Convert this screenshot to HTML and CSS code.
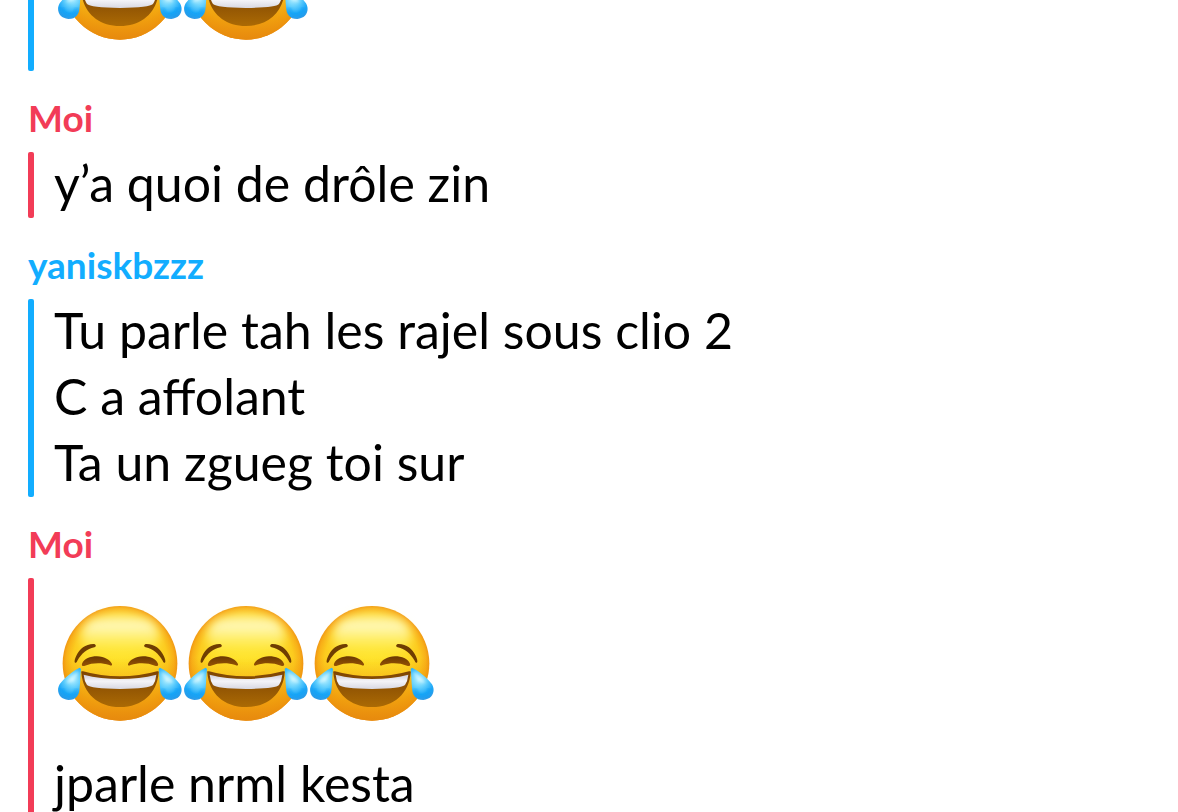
FILE: index.html
```html
<!DOCTYPE html>
<html lang="fr">
<head>
    <meta charset="utf-8">
    <meta name="viewport" content="width=device-width, initial-scale=1">
    <title>Chat</title>
    <link rel="stylesheet" href="styles.css">
</head>
<body>
    <!-- emoji shared by the messages -->
    <svg class="defs" width="0" height="0" aria-hidden="true">
        <defs>
            <radialGradient id="face" gradientUnits="userSpaceOnUse" cx="210" cy="202" r="174">
                <stop offset="0" stop-color="#ffe32a"/>
                <stop offset=".6" stop-color="#fedc26"/>
                <stop offset=".82" stop-color="#fccb1e"/>
                <stop offset=".93" stop-color="#f8b018"/>
                <stop offset="1" stop-color="#ee9012"/>
            </radialGradient>
            <linearGradient id="shade" x1="0" y1="0" x2="0" y2="1">
                <stop offset=".45" stop-color="#ee9408" stop-opacity="0"/>
                <stop offset=".8" stop-color="#ee960b" stop-opacity=".8"/>
                <stop offset="1" stop-color="#e78a0e"/>
            </linearGradient>
            <linearGradient id="shine" x1="0" y1="0" x2="0" y2="1">
                <stop offset="0" stop-color="#fff36e" stop-opacity=".5"/>
                <stop offset=".25" stop-color="#fffac8"/>
                <stop offset=".6" stop-color="#fff373" stop-opacity=".7"/>
                <stop offset="1" stop-color="#ffec30" stop-opacity="0"/>
            </linearGradient>
            <linearGradient id="teeth" x1="0" y1="0" x2="0" y2="1">
                <stop offset="0" stop-color="#d0ced9"/>
                <stop offset=".45" stop-color="#f4f4f8"/>
                <stop offset="1" stop-color="#d8d8e2"/>
            </linearGradient>
            <linearGradient id="mouth" x1="0" y1="0" x2="0" y2="1">
                <stop offset="0" stop-color="#7c4303"/>
                <stop offset="1" stop-color="#ab6a04"/>
            </linearGradient>
            <linearGradient id="eye" x1="0" y1="0" x2="0" y2="1">
                <stop offset="0" stop-color="#6a3802"/>
                <stop offset="1" stop-color="#955304"/>
            </linearGradient>
            <radialGradient id="tear" gradientUnits="userSpaceOnUse" cx="68" cy="254" r="60">
                <stop offset="0" stop-color="#b4efff"/>
                <stop offset=".4" stop-color="#62cffd"/>
                <stop offset=".75" stop-color="#1fa9f8"/>
                <stop offset="1" stop-color="#2d9be8"/>
            </radialGradient>
            <filter id="soft" x="-20%" y="-20%" width="140%" height="140%">
                <feGaussianBlur stdDeviation="4"/>
            </filter>
            <filter id="softer" x="-25%" y="-30%" width="150%" height="160%">
                <feGaussianBlur stdDeviation="14"/>
            </filter>
        </defs>
        <symbol id="joy" viewBox="21 15 378 378">
            <circle cx="210" cy="205" r="172" fill="url(#face)"/>
            <circle cx="210" cy="205" r="172" fill="url(#shade)"/>
            <ellipse cx="210" cy="124" rx="118" ry="72" fill="url(#shine)" filter="url(#softer)"/>

            <g id="brow">
                <path d="M76 203 C72 202 74 192 79 182 C89 161 106 148 130 147 C139 147 140 155 133 157 C111 162 95 175 82 197 C80 201 79 203 76 203 Z" fill="#6f3d02"/>
                <path d="M96 206 C103 190 120 184 141 184 C164 185 180 195 186 207 C187 212 183 213 178 210 C154 202 127 203 105 212 C98 215 94 211 96 206 Z" fill="url(#eye)"/>
            </g>
            <use href="#brow" transform="translate(420 0) scale(-1 1)"/>

            <path d="M94 233 Q91 227 99 229 Q152 244 210 244 Q268 244 321 229 Q329 227 326 233 C321 294 277 336 210 336 C143 336 99 294 94 233 Z" fill="url(#mouth)"/>
            <path d="M101 239 Q152 252 210 252 Q268 252 319 239 Q317 258 309 270 Q299 281 210 282 Q121 281 111 270 Q103 258 101 239 Z" fill="url(#teeth)"/>

            <g id="drop">
                <path d="M89 218 C71 226 42 249 29 268 C17 289 28 313 55 315 C79 315 88 299 89 278 C91 259 91 237 93 222 Z" fill="url(#tear)"/>
                <path d="M84 230 C75 236 58 250 49 262 C57 266 65 262 73 253 C80 245 83 238 84 230 Z" fill="#dffaff" opacity=".7" filter="url(#soft)"/>
                <path d="M36 284 Q40 306 60 304 Q76 302 79 287" fill="none" stroke="#0b9ff4" stroke-width="10" stroke-linecap="round" opacity=".7" filter="url(#soft)"/>
            </g>
            <use href="#drop" transform="translate(419 0) scale(-1 1)"/>
        </symbol>
    </svg>

    <main class="chat">
        <section class="thread friend">
            <div class="messages">
                <p class="emojis">
                    <svg class="emoji" role="img" aria-label="joy"><use href="#joy"/></svg>
                    <svg class="emoji" role="img" aria-label="joy"><use href="#joy"/></svg>
                </p>
            </div>
        </section>

        <section class="thread me">
            <h2>Moi</h2>
            <div class="messages">
                <p>y’a quoi de drôle zin</p>
            </div>
        </section>

        <section class="thread friend">
            <h2>yaniskbzzz</h2>
            <div class="messages">
                <p>Tu parle tah les rajel sous clio 2</p>
                <p>C a affolant</p>
                <p>Ta un zgueg toi sur</p>
            </div>
        </section>

        <section class="thread me">
            <h2>Moi</h2>
            <div class="messages">
                <p class="emojis">
                    <svg class="emoji" role="img" aria-label="joy"><use href="#joy"/></svg>
                    <svg class="emoji" role="img" aria-label="joy"><use href="#joy"/></svg>
                    <svg class="emoji" role="img" aria-label="joy"><use href="#joy"/></svg>
                </p>
                <p>jparle nrml kesta</p>
            </div>
        </section>
    </main>
</body>
</html>
```
FILE: styles.css
```css
body {
    margin: 0;
    background: #fff;
    color: #000;
    font-family: "Avenir Next", Lato, sans-serif;
    overflow: hidden;
}
.defs { position: absolute; }

/* scrolled past the start of the conversation */
.chat {
    display: flex;
    flex-direction: column;
    gap: 26px;
    margin-top: -103px;
    padding: 0 28px;
}
.thread h2 {
    margin: 0 0 13px;
    font-size: 37px;
    font-weight: 700;
    line-height: 42px;
}
.me { --accent: #f23c57; }
.friend { --accent: #12adff; }
.thread h2 { color: var(--accent); }

.messages {
    position: relative;
    padding-left: 26px;
}
.messages::before {
    content: "";
    position: absolute;
    left: 0;
    top: 0;
    bottom: 0;
    width: 6px;
    border-radius: 2px;
    background: var(--accent);
}
.messages p {
    margin: 0;
    padding-bottom: 4px;
    font-size: 50px;
    line-height: 62px;
}
.messages .emojis {
    display: flex;
    padding: 22px 3px 26px;
}
.emoji {
    width: 126px;
    height: 126px;
}
```
